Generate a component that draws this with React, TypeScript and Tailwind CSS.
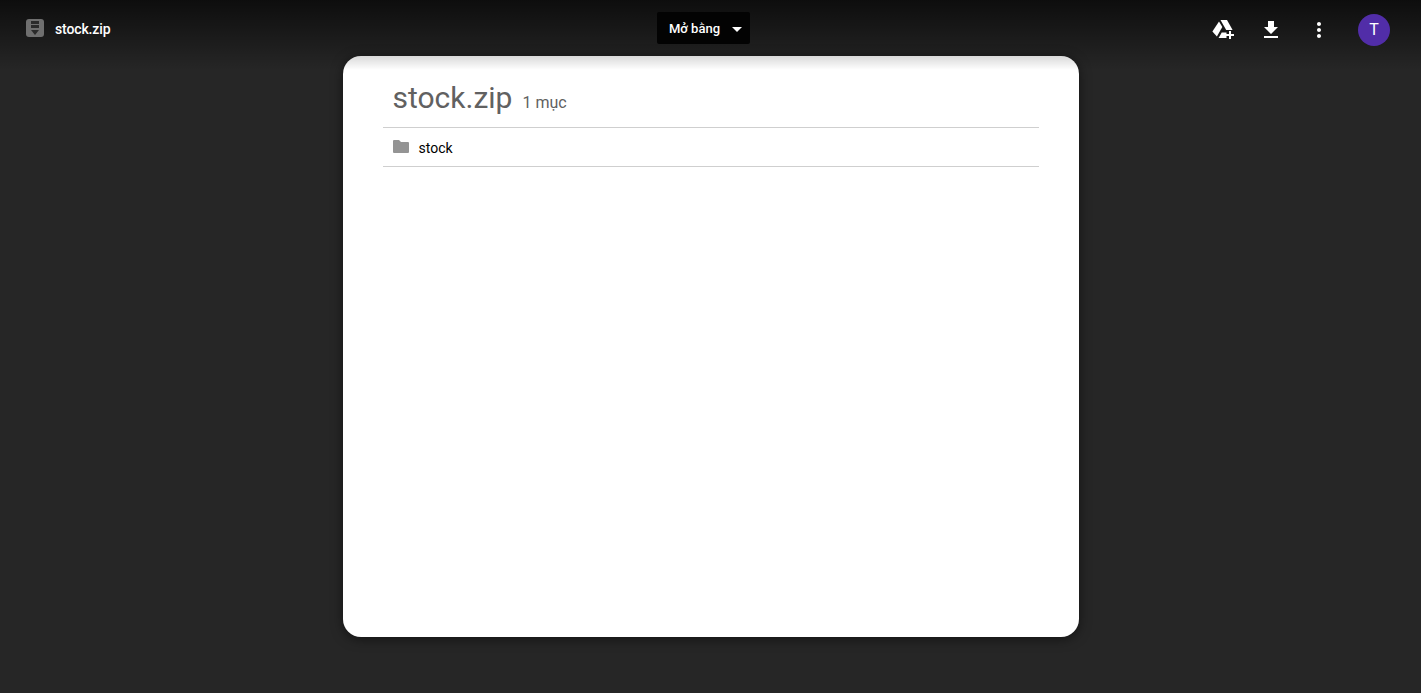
import React from 'react';

const fileName = 'stock.zip';

const ArchiveIcon = () => (
  <svg width="18" height="18" viewBox="0 0 18 18" className="block">
    <rect width="18" height="18" rx="3" fill="#6f6f6f" />
    <path d="M5 2h8v3H5zM5 6h8v3H5z" fill="#2a2a2a" />
    <path d="M5 11h8l-4 5z" fill="#2a2a2a" />
  </svg>
);

const DriveAddIcon = () => (
  <svg width="24" height="24" viewBox="0 0 24 24" fill="white" className="block">
    <path d="M9.5 2H16l5.6 10h-6.4z" />
    <path d="M8 3.4l3.3 5.7-5.4 9.4L1.4 13.6z" />
    <path d="M7.6 20l3.1-5.4H15.5V20z" />
    <path d="M18 13h2v3h3v2h-3v3h-2v-3h-3v-2h3z" />
  </svg>
);

const DownloadIcon = () => (
  <svg width="24" height="24" viewBox="0 0 24 24" fill="white" className="block">
    <path d="M19 9h-4V3H9v6H5l7 7 7-7zM5 18v2h14v-2H5z" />
  </svg>
);

const MoreIcon = () => (
  <svg width="24" height="24" viewBox="0 0 24 24" fill="white" className="block">
    <path d="M12 8c1.1 0 2-.9 2-2s-.9-2-2-2-2 .9-2 2 .9 2 2 2zm0 2c-1.1 0-2 .9-2 2s.9 2 2 2 2-.9 2-2-.9-2-2-2zm0 6c-1.1 0-2 .9-2 2s.9 2 2 2 2-.9 2-2-.9-2-2-2z" />
  </svg>
);

const FolderIcon = () => (
  <svg width="16" height="13" viewBox="0 0 16 13" fill="#949494" className="block">
    <path d="M0 1Q0 0 1 0H6L8 2H15Q16 2 16 3V12Q16 13 15 13H1Q0 13 0 12z" />
  </svg>
);

export default function App() {
  return (
    <div className="relative h-screen overflow-hidden bg-[#262626] font-['Roboto',sans-serif]">
      {/* top shade runs over the card edge */}
      <div className="pointer-events-none absolute inset-x-0 top-0 h-[70px] bg-gradient-to-b from-black/65 to-transparent" />

      <header className="relative flex h-14 items-start justify-between pl-[26px] pr-[31px] pt-3">
        <div className="flex h-8 w-[300px] items-center gap-[11px] pt-0.5">
          <span className="-translate-y-px"><ArchiveIcon /></span>
          <span className="text-sm font-medium tracking-[-0.01em] text-white">{fileName}</span>
        </div>
        <button className="mr-[9px] flex h-8 w-[93px] items-center rounded-[2px] bg-[#030303] pl-3 pt-0.5 text-[13px] font-medium text-white">
          Mở bằng
          <span className="ml-3 h-0 w-0 border-x-[5px] border-t-[5px] border-x-transparent border-t-white" />
        </button>
        <div className="flex h-9 w-[300px] items-center justify-end">
          <DriveAddIcon />
          <span className="ml-6"><DownloadIcon /></span>
          <span className="ml-6"><MoreIcon /></span>
          <span className="ml-[27px] flex h-8 w-8 items-center justify-center rounded-full bg-[#512da8] text-base text-white">T</span>
        </div>
      </header>

      <main className="flex justify-center">
        <section className="relative h-[581px] w-[736px] overflow-hidden rounded-[18px] bg-white px-10 shadow-[0_2px_12px_rgba(0,0,0,0.5)]">
          <div className="absolute inset-x-0 top-0 h-[14px] bg-gradient-to-b from-black/15 to-transparent" />
          <div className="flex h-[72px] items-baseline gap-[10px] border-b border-[#cfcfcf] px-2.5 pt-[22px]">
            <h1 className="text-[30px] leading-[40px] text-[#616161]">{fileName}</h1>
            <span className="text-base text-[#616161]">1 mục</span>
          </div>
          <div className="flex h-[39px] items-center gap-2.5 border-b border-[#cfcfcf] px-2.5">
            <span className="-translate-y-px"><FolderIcon /></span>
            <span className="pt-0.5 text-sm text-black">stock</span>
          </div>
        </section>
      </main>
    </div>
  );
}
